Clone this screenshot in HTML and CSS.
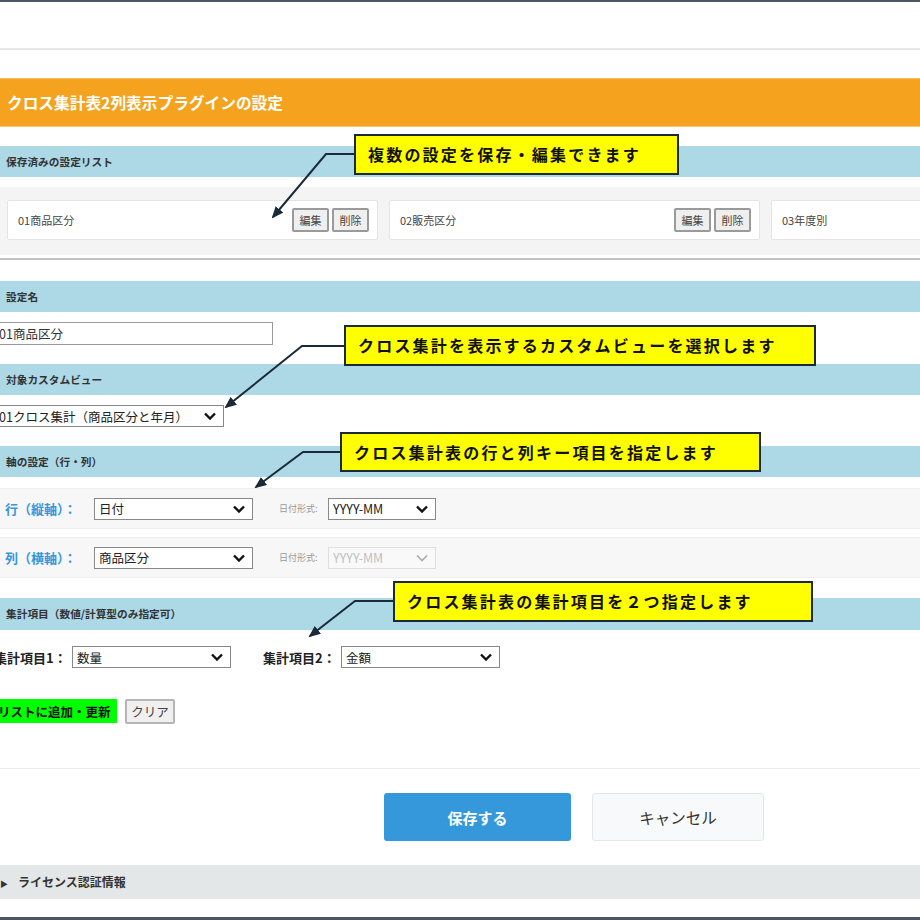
FILE: index.html
```html
<!DOCTYPE html>
<html lang="ja">
<head>
  <meta charset="UTF-8" />
  <title>クロス集計表2列表示プラグインの設定</title>
  <meta name="viewport" content="width=device-width, initial-scale=1.0"/>
  <link rel="stylesheet" href="styles.css">
</head>
<body>

  <div class="top-bar"></div>

  <div class="page">
    <h1 class="title">クロス集計表2列表示プラグインの設定</h1>

    <h2 class="section-head">保存済みの設定リスト</h2>
    <div class="saved-list">
      <div class="saved-card">
        <span>01商品区分</span>
        <span class="card-buttons"><button class="small-btn">編集</button><button class="small-btn">削除</button></span>
      </div>
      <div class="saved-card">
        <span>02販売区分</span>
        <span class="card-buttons"><button class="small-btn">編集</button><button class="small-btn">削除</button></span>
      </div>
      <div class="saved-card">
        <span>03年度別</span>
        <span class="card-buttons"><button class="small-btn">編集</button><button class="small-btn">削除</button></span>
      </div>
    </div>

    <div class="divider"></div>

    <h2 class="section-head gap-lg">設定名</h2>
    <input class="name-input" type="text" value="01商品区分">

    <h2 class="section-head">対象カスタムビュー</h2>
    <span class="select-box view-select">
      <select><option>01クロス集計（商品区分と年月）</option></select>
      <svg class="chevron" width="12" height="8" viewBox="0 0 12 8"><path d="M1 1.5 L6 6.5 L11 1.5" /></svg>
    </span>

    <h2 class="section-head">軸の設定（行・列）</h2>
    <div class="axis-row">
      <span class="axis-label">行（縦軸）：</span>
      <span class="select-box field-select">
        <select><option>日付</option></select>
        <svg class="chevron" width="12" height="8" viewBox="0 0 12 8"><path d="M1 1.5 L6 6.5 L11 1.5" /></svg>
      </span>
      <span class="format-label">日付形式:</span>
      <span class="select-box format-select">
        <select><option>YYYY-MM</option></select>
        <svg class="chevron" width="12" height="8" viewBox="0 0 12 8"><path d="M1 1.5 L6 6.5 L11 1.5" /></svg>
      </span>
    </div>
    <div class="axis-row second">
      <span class="axis-label">列（横軸）：</span>
      <span class="select-box field-select">
        <select><option>商品区分</option></select>
        <svg class="chevron" width="12" height="8" viewBox="0 0 12 8"><path d="M1 1.5 L6 6.5 L11 1.5" /></svg>
      </span>
      <span class="format-label">日付形式:</span>
      <span class="select-box format-select is-disabled">
        <select disabled><option>YYYY-MM</option></select>
        <svg class="chevron" width="12" height="8" viewBox="0 0 12 8"><path d="M1 1.5 L6 6.5 L11 1.5" /></svg>
      </span>
    </div>

    <h2 class="section-head tall">集計項目（数値/計算型のみ指定可）</h2>
    <div class="agg-row">
      <span class="agg-label">集計項目1：</span>
      <span class="select-box field-select">
        <select><option>数量</option></select>
        <svg class="chevron" width="12" height="8" viewBox="0 0 12 8"><path d="M1 1.5 L6 6.5 L11 1.5" /></svg>
      </span>
      <span class="agg-label second">集計項目2：</span>
      <span class="select-box field-select">
        <select><option>金額</option></select>
        <svg class="chevron" width="12" height="8" viewBox="0 0 12 8"><path d="M1 1.5 L6 6.5 L11 1.5" /></svg>
      </span>
    </div>

    <div class="list-actions">
      <button class="add-btn">リストに追加・更新</button>
      <button class="clear-btn">クリア</button>
    </div>

    <div class="footer-line"></div>

    <div class="main-actions">
      <button class="save-btn">保存する</button>
      <button class="cancel-btn">キャンセル</button>
    </div>

    <div class="license-bar"><span class="arrow">&#9654;</span>ライセンス認証情報</div>
  </div>

  <!-- callouts -->
  <svg class="arrows" width="920" height="920" viewBox="0 0 920 920">
    <defs>
      <marker id="head" markerUnits="userSpaceOnUse" markerWidth="12" markerHeight="10" refX="10" refY="5" orient="auto">
        <path d="M0 0 L12 5 L0 10 z" fill="#1b2a38" />
      </marker>
    </defs>
    <polyline points="354,154 326,154 273,217" marker-end="url(#head)" />
    <polyline points="344,346 302,346 226,407" marker-end="url(#head)" />
    <polyline points="340,452 303,452 256,487" marker-end="url(#head)" />
    <polyline points="393,601 355,601 310,636" marker-end="url(#head)" />
  </svg>

  <div class="callout callout-saved">複数の設定を保存・編集できます</div>
  <div class="callout callout-view">クロス集計を表示するカスタムビューを選択します</div>
  <div class="callout callout-axis">クロス集計表の行と列キー項目を指定します</div>
  <div class="callout callout-agg">クロス集計表の集計項目を２つ指定します</div>

</body>
</html>
```

FILE: styles.css
```css
* {
  box-sizing: border-box;
}

body {
  margin: 0;
  width: 920px;
  height: 920px;
  overflow: hidden;
  position: relative;
  font-family: "Noto Sans CJK JP", "Noto Sans", sans-serif;
  color: #333;
  background: #fff;
  border-top: 2px solid #4b5661;
  border-bottom: 3px solid #4b5661;
}

.top-bar {
  height: 48px;
  border-bottom: 2px solid #e8e8e8;
}

.page {
  margin-left: -6px;
  width: 932px;
}

.title {
  margin: 28px 0 0;
  height: 49px;
  line-height: 47px;
  padding-left: 13px;
  background: #f5a31e;
  border-top: 1px solid #f8be66;
  border-bottom: 1px solid #f9c57a;
  color: #fff;
  font-size: 15.7px;
  font-weight: bold;
}

.section-head {
  margin: 19px 0 0;
  height: 31px;
  line-height: 31px;
  padding-left: 12px;
  background: #add8e6;
  font-size: 10.7px;
  font-weight: bold;
  color: #333;
}

.section-head.gap-lg {
  margin-top: 21px;
}

.section-head.tall {
  margin-top: 20px;
  height: 32px;
  line-height: 32px;
}

/* saved list */
.saved-list {
  margin-top: 10px;
  height: 68px;
  padding: 13px 0 0 13px;
  background: #f4f4f4;
  display: flex;
  gap: 11px;
  overflow: hidden;
}

.saved-card {
  flex: 0 0 371px;
  height: 40px;
  background: #fff;
  border: 1px solid #e4e4e4;
  border-radius: 2px;
  display: flex;
  align-items: center;
  justify-content: space-between;
  padding: 0 8px 0 10px;
  font-size: 11px;
  color: #444;
}

.card-buttons {
  display: flex;
  gap: 3px;
}

.small-btn {
  width: 37px;
  height: 24px;
  padding: 0;
  font-family: inherit;
  font-size: 11px;
  color: #444;
  background: #efefef;
  border: 2px solid #9a9a9a;
  border-radius: 2px;
}

.divider {
  margin-top: 3px;
  height: 2px;
  background: #c3c3c3;
}

/* fields */
.name-input {
  display: block;
  margin-top: 10px;
  width: 279px;
  height: 23px;
  padding: 0 4px;
  border: 1px solid #999;
  font-family: inherit;
  font-size: 12.5px;
  color: #333;
}

.select-box {
  position: relative;
  display: inline-block;
  height: 22px;
}

.select-box select {
  display: block;
  appearance: none;
  width: 100%;
  height: 100%;
  padding: 0 0 0 4px;
  border: 1px solid #888;
  border-radius: 0;
  background: #fff;
  font-family: inherit;
  font-size: 12.5px;
  color: #222;
}

.chevron {
  position: absolute;
  right: 8px;
  top: 7px;
  pointer-events: none;
}

.chevron path {
  fill: none;
  stroke: #111;
  stroke-width: 2.4;
}

.select-box.is-disabled select {
  color: #aaa;
  border-color: #d6d6d6;
  background: #fafafa;
}

.select-box.is-disabled .chevron path {
  stroke: #aaa;
  stroke-width: 1.6;
}

.view-select {
  display: block;
  margin-top: 10px;
  width: 230px;
}

.axis-row {
  margin-top: 11px;
  height: 41px;
  padding-left: 11px;
  background: #f7f7f7;
  border-top: 1px solid #efefef;
  border-bottom: 1px solid #efefef;
  display: flex;
  align-items: center;
}

.axis-row.second {
  margin-top: 8px;
}

.axis-label {
  width: 89px;
  font-size: 13px;
  font-weight: bold;
  color: #3498db;
}

.field-select {
  width: 159px;
}

.format-label {
  width: 49px;
  margin-left: 26px;
  font-size: 9px;
  color: #999;
}

.format-select {
  width: 108px;
}

.agg-row {
  margin-top: 16px;
  display: flex;
  align-items: center;
}

.agg-label {
  width: 78px;
  font-size: 13px;
  font-weight: bold;
  color: #222;
}

.agg-label.second {
  margin-left: 32px;
  width: 78px;
}

.list-actions {
  margin-top: 31px;
  display: flex;
  gap: 8px;
}

.add-btn {
  width: 123px;
  height: 24px;
  padding: 0 0 0 4px;
  text-align: left;
  border: none;
  background: #00ff00;
  font-family: inherit;
  font-size: 12.5px;
  font-weight: bold;
  color: #111;
}

.clear-btn {
  width: 50px;
  height: 25px;
  padding: 0;
  background: #f0f0f0;
  border: 2px solid #b5b5b5;
  border-radius: 2px;
  font-family: inherit;
  font-size: 12.5px;
  color: #444;
}

.footer-line {
  margin-top: 44px;
  height: 1px;
  background: #ececec;
}

.main-actions {
  margin-top: 24px;
  padding-left: 390px;
  display: flex;
  gap: 21px;
}

.save-btn {
  width: 187px;
  height: 48px;
  border: none;
  border-radius: 3px;
  background: #3498db;
  color: #fff;
  font-family: inherit;
  font-size: 15px;
  font-weight: bold;
}

.cancel-btn {
  width: 172px;
  height: 48px;
  border: 1px solid #e3e7e8;
  border-radius: 3px;
  background: #f7f9fa;
  color: #333;
  font-family: inherit;
  font-size: 15.5px;
}

.license-bar {
  margin-top: 24px;
  height: 34px;
  line-height: 34px;
  padding-left: 6px;
  background: #e3e7e8;
  font-size: 12px;
  font-weight: bold;
  color: #333;
}

.license-bar .arrow {
  font-size: 8px;
  margin-right: 10px;
}

/* callouts over the form */
.arrows {
  position: absolute;
  left: 0;
  top: -2px;
  pointer-events: none;
  z-index: 2;
}

.arrows polyline {
  fill: none;
  stroke: #1b2a38;
  stroke-width: 2;
}

.callout {
  position: absolute;
  z-index: 3;
  height: 41px;
  line-height: 37px;
  padding-left: 12px;
  background: #ffff00;
  border: 2px solid #1b2a38;
  font-size: 16px;
  font-weight: bold;
  letter-spacing: 2.2px;
  color: #111;
  white-space: nowrap;
}

.callout-saved {
  left: 354px;
  top: 132px;
  width: 325px;
}

.callout-view {
  left: 344px;
  top: 323px;
  width: 472px;
}

.callout-axis {
  left: 340px;
  top: 430px;
  width: 421px;
  height: 40px;
  line-height: 36px;
}

.callout-agg {
  left: 393px;
  top: 579px;
  width: 420px;
}
```
